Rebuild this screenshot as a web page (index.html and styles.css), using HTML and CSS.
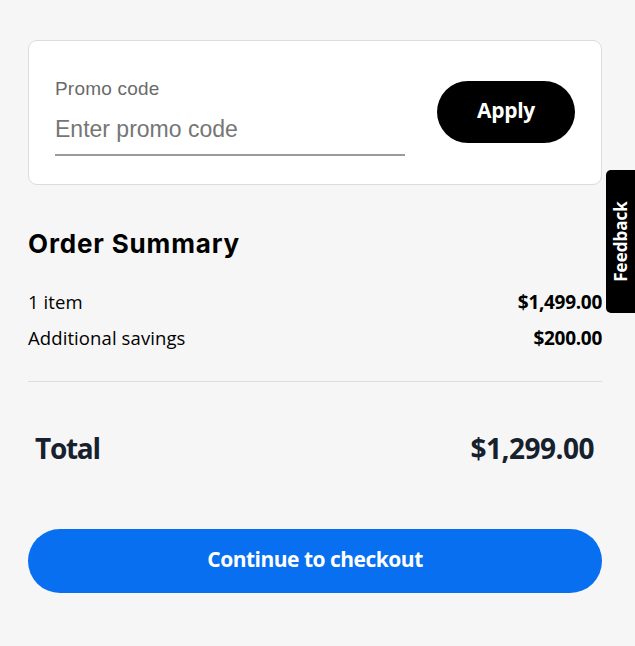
FILE: index.html
```html
<!DOCTYPE html>
<html lang="en">
<head>
<meta charset="utf-8">
<link rel="stylesheet" href="styles.css">
</head>
<body>
<main class="page">
  <section class="promo-card">
    <div class="promo-field">
      <label class="promo-label" for="promo">Promo code</label>
      <input id="promo" class="promo-input" type="text" placeholder="Enter promo code">
    </div>
    <button class="apply-btn" type="button">Apply</button>
  </section>

  <section class="summary">
    <h2 class="summary-title">Order Summary</h2>
    <div class="summary-row">
      <span class="row-label">1 item</span>
      <span class="row-value">$1,499.00</span>
    </div>
    <div class="summary-row">
      <span class="row-label">Additional savings</span>
      <span class="row-value">$200.00</span>
    </div>
    <hr class="divider">
    <div class="total-row">
      <span class="total-label">Total</span>
      <span class="total-value">$1,299.00</span>
    </div>
    <button class="checkout-btn" type="button">Continue to checkout</button>
  </section>
</main>
<div class="feedback-tab"><span class="feedback-text">Feedback</span></div>
</body>
</html>
```

FILE: styles.css
```css
* { box-sizing: border-box; }
html, body { margin: 0; padding: 0; }
body {
  background: #f6f6f6;
  font-family: "Open Sans", "Liberation Sans", sans-serif;
  color: #000;
  width: 635px;
  height: 646px;
  overflow: hidden;
}
.page {
  padding: 40px 33px 0 28px;
}
.promo-card {
  background: #fff;
  border: 1px solid #dcdcdc;
  border-radius: 9px;
  height: 145px;
  display: flex;
  align-items: flex-start;
  justify-content: space-between;
  padding: 37px 26px 0 26px;
}
.promo-field {
  display: flex;
  flex-direction: column;
  width: 350px;
}
.promo-label {
  font-family: "Liberation Sans", Arial, sans-serif;
  font-size: 19px;
  letter-spacing: 0.2px;
  color: #6a6a6a;
  line-height: 22px;
}
.promo-input {
  font-family: "Liberation Sans", Arial, sans-serif;
  font-size: 23px;
  line-height: 26px;
  height: 56px;
  border: 0;
  border-bottom: 2px solid #9a9a9a;
  background: transparent;
  padding: 16px 0 12px 0;
  margin: 0;
  outline: none;
  color: #333;
  width: 350px;
}
.promo-input::placeholder { color: #767676; }
.apply-btn {
  background: #000;
  color: #fff;
  border: 0;
  border-radius: 31px;
  width: 138px;
  height: 62px;
  margin-top: 3px;
  font-family: "Open Sans", sans-serif;
  font-weight: 700;
  font-size: 21px;
  letter-spacing: -0.3px;
  padding: 0 0 4px 0;
}
.summary {
  padding-top: 42px;
}
.summary-title {
  margin: 0;
  font-family: "Inter", "Lato", sans-serif;
  font-weight: 700;
  font-size: 26px;
  letter-spacing: 0.85px;
  line-height: 34px;
}
.summary-row {
  display: flex;
  justify-content: space-between;
  align-items: baseline;
  font-size: 18.5px;
  line-height: 24px;
}
.summary-row:first-of-type { margin-top: 29px; }
.summary-row + .summary-row { margin-top: 12px; }
.row-label { letter-spacing: 0.1px; }
.row-value { font-weight: 700; font-size: 19px; letter-spacing: -0.3px; }
.divider {
  border: 0;
  border-top: 1px solid #dddddd;
  margin: 31px 0 0 0;
}
.total-row {
  display: flex;
  justify-content: space-between;
  align-items: baseline;
  padding: 0 8px 0 7px;
  margin-top: 47px;
  color: #17212e;
  font-weight: 700;
  font-size: 28px;
  line-height: 38px;
}
.total-label { letter-spacing: -1.3px; }
.total-value { letter-spacing: -0.5px; }
.checkout-btn {
  display: block;
  width: 100%;
  height: 64px;
  margin-top: 62px;
  border: 0;
  border-radius: 32px;
  background: #086ff0;
  color: #fff;
  font-family: "Open Sans", sans-serif;
  font-weight: 700;
  font-size: 21px;
  letter-spacing: -0.5px;
  padding: 0 0 4px 0;
}
.feedback-tab {
  position: absolute;
  left: 606px;
  top: 170px;
  width: 29px;
  height: 143px;
  background: #000;
  border-radius: 5px 0 0 5px;
  display: flex;
  align-items: center;
  justify-content: center;
}
.feedback-text {
  transform: rotate(-90deg);
  color: #fff;
  font-family: "Open Sans", sans-serif;
  font-weight: 700;
  font-size: 17px;
  white-space: nowrap;
}
```
